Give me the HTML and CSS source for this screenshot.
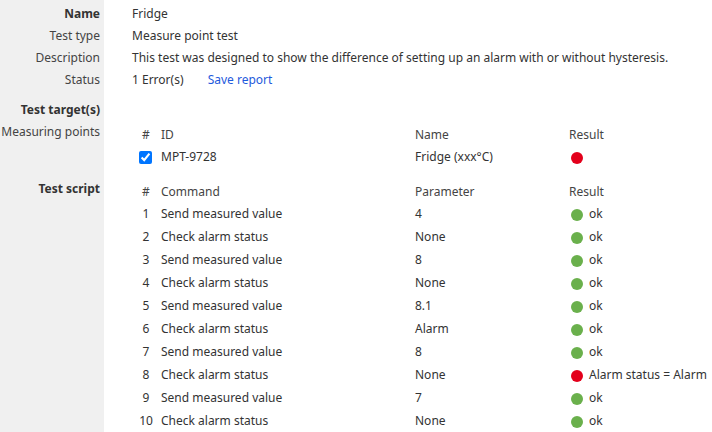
FILE: index.html
```html
<!DOCTYPE html>
<html lang="en">
<head>
    <meta charset="UTF-8">
    <meta name="viewport" content="width=device-width, initial-scale=1.0">
    <title>Test report</title>
    <link rel="stylesheet" href="styles.css">
</head>
<body>
    <div class="page">
        <div class="row">
            <div class="label strong">Name</div>
            <div class="value">Fridge</div>
        </div>
        <div class="row">
            <div class="label">Test type</div>
            <div class="value">Measure point test</div>
        </div>
        <div class="row">
            <div class="label">Description</div>
            <div class="value">This test was designed to show the difference of setting up an alarm with or without hysteresis.</div>
        </div>
        <div class="row">
            <div class="label">Status</div>
            <div class="value">1 Error(s) <a href="#" class="link">Save report</a></div>
        </div>

        <div class="row section">
            <div class="label strong">Test target(s)</div>
            <div class="value"></div>
        </div>
        <div class="row">
            <div class="label">Measuring points</div>
            <div class="value">
                <table class="grid-table">
                    <tr class="short">
                        <th class="num">#</th>
                        <th class="col-a">ID</th>
                        <th class="col-b">Name</th>
                        <th>Result</th>
                    </tr>
                    <tr class="short">
                        <td class="num"><input type="checkbox" class="check" checked></td>
                        <td>MPT-9728</td>
                        <td>Fridge (xxx°C)</td>
                        <td><span class="dot fail"></span></td>
                    </tr>
                </table>
            </div>
        </div>

        <div class="row section-small">
            <div class="label strong">Test script</div>
            <div class="value">
                <table class="grid-table">
                    <tr class="head">
                        <th class="num">#</th>
                        <th class="col-a">Command</th>
                        <th class="col-b">Parameter</th>
                        <th>Result</th>
                    </tr>
                    <tr><td class="num">1</td><td>Send measured value</td><td>4</td><td><span class="dot ok"></span>ok</td></tr>
                    <tr><td class="num">2</td><td>Check alarm status</td><td>None</td><td><span class="dot ok"></span>ok</td></tr>
                    <tr><td class="num">3</td><td>Send measured value</td><td>8</td><td><span class="dot ok"></span>ok</td></tr>
                    <tr><td class="num">4</td><td>Check alarm status</td><td>None</td><td><span class="dot ok"></span>ok</td></tr>
                    <tr><td class="num">5</td><td>Send measured value</td><td>8.1</td><td><span class="dot ok"></span>ok</td></tr>
                    <tr><td class="num">6</td><td>Check alarm status</td><td>Alarm</td><td><span class="dot ok"></span>ok</td></tr>
                    <tr><td class="num">7</td><td>Send measured value</td><td>8</td><td><span class="dot ok"></span>ok</td></tr>
                    <tr><td class="num">8</td><td>Check alarm status</td><td>None</td><td><span class="dot fail"></span>Alarm status = Alarm</td></tr>
                    <tr><td class="num">9</td><td>Send measured value</td><td>7</td><td><span class="dot ok"></span>ok</td></tr>
                    <tr><td class="num">10</td><td>Check alarm status</td><td>None</td><td><span class="dot ok"></span>ok</td></tr>
                </table>
            </div>
        </div>
    </div>
</body>
</html>
```

FILE: styles.css
```css
* {
    margin: 0;
    padding: 0;
    box-sizing: border-box;
}

body {
    font-family: "Noto Sans", "Open Sans", Arial, sans-serif;
    font-size: 12px;
    color: #333;
    background-color: white;
}

/* grey label column runs the full height */
.page {
    min-height: 100vh;
    padding-top: 3px;
    background: linear-gradient(to right, #f0f0f0 104px, white 104px);
}

.row {
    display: grid;
    grid-template-columns: 104px 1fr;
    line-height: 22px;
}

.label {
    text-align: right;
    padding-right: 4px;
    color: #444;
    white-space: nowrap;
}

.label.strong {
    font-weight: 700;
    color: #333;
}

.value {
    padding-left: 28px;
    white-space: nowrap;
}

.link {
    color: #1e5adc;
    text-decoration: none;
    margin-left: 21px;
}

.section {
    margin-top: 8px;
}

.section-small {
    margin-top: 10px;
}

.grid-table {
    border-collapse: collapse;
    margin: 3px 0 0 7px;
}

.grid-table th,
.grid-table td {
    padding: 0;
    height: 23px;
    text-align: left;
    font-weight: 400;
    vertical-align: middle;
    white-space: nowrap;
}

.grid-table tr.short th,
.grid-table tr.short td {
    height: 22px;
}

.grid-table tr.head th {
    height: 21px;
    line-height: 21px;
}

.grid-table th {
    color: #444;
}

.grid-table .num {
    width: 22px;
    padding-right: 8px;
    text-align: center;
}

.col-a {
    width: 254px;
}

.col-b {
    width: 154px;
}

.check {
    display: block;
    width: 13px;
    height: 13px;
    accent-color: #0075ff;
}

.dot {
    display: inline-block;
    width: 12px;
    height: 12px;
    border-radius: 50%;
    margin: 0 6px 0 2px;
    vertical-align: -3px;
}

.dot.ok {
    background-color: #6ab04c;
}

.dot.fail {
    background-color: #e3001b;
}
```
